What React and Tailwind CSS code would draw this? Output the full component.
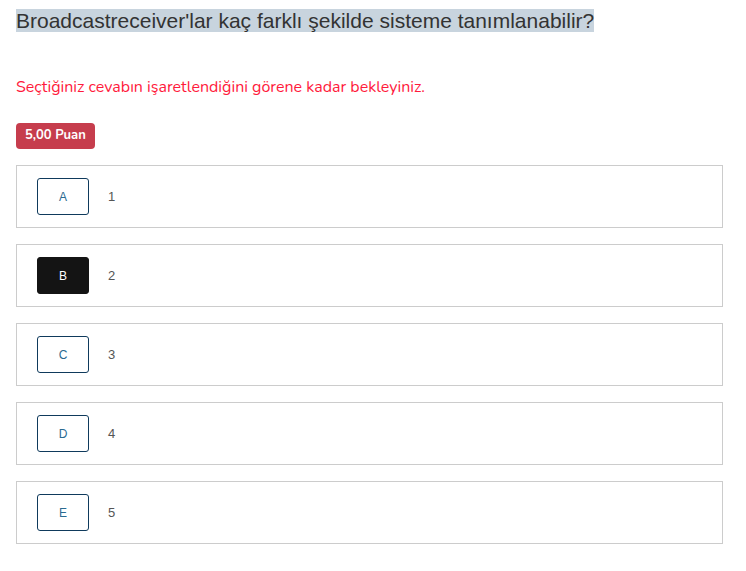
import React from "react";

const options = [
  { key: "A", text: "1" },
  { key: "B", text: "2", selected: true },
  { key: "C", text: "3" },
  { key: "D", text: "4" },
  { key: "E", text: "5" },
];

export default function App() {
  return (
    <div className="min-h-screen bg-white px-4 pt-[8px] font-['Nunito','Lato','Noto_Sans',sans-serif]">
      {/* soru metni */}
      <h1 className="inline bg-[#c8d4de] font-['Liberation_Sans',Arial,sans-serif] text-[21px] leading-[25px] text-[#333]">
        Broadcastreceiver'lar kaç farklı şekilde sisteme tanımlanabilir?
      </h1>

      <p className="mt-[40px] text-[16px] text-[#ff1a3c]">
        Seçtiğiniz cevabın işaretlendiğini görene kadar bekleyiniz.
      </p>

      <div className="mt-[24px] flex">
        <span className="flex h-[26px] items-center rounded-[4px] bg-[#c63d4d] px-[9px] text-[13px] font-bold text-white">
          5,00 Puan
        </span>
      </div>

      {/* seçenekler */}
      <div className="mt-[16px] flex w-[707px] flex-col gap-[16px]">
        {options.map((o) => (
          <div
            key={o.key}
            className="flex h-[63px] items-center border border-[#cccccc] pl-[20px]"
          >
            <div
              className={`flex h-[37px] items-center justify-center rounded-[3px] border px-[20px] font-['Liberation_Sans',Arial,sans-serif] text-[12px] ${
                o.selected
                  ? "border-[#141414] bg-[#141414] text-white"
                  : "border-[#0f3a5c] text-[#2a6a90]"
              }`}
            >
              <span className="w-[10px] text-center">{o.key}</span>
            </div>
            <span className="ml-[19px] font-['Liberation_Sans',Arial,sans-serif] text-[13px] text-[#555]">
              {o.text}
            </span>
          </div>
        ))}
      </div>
    </div>
  );
}
